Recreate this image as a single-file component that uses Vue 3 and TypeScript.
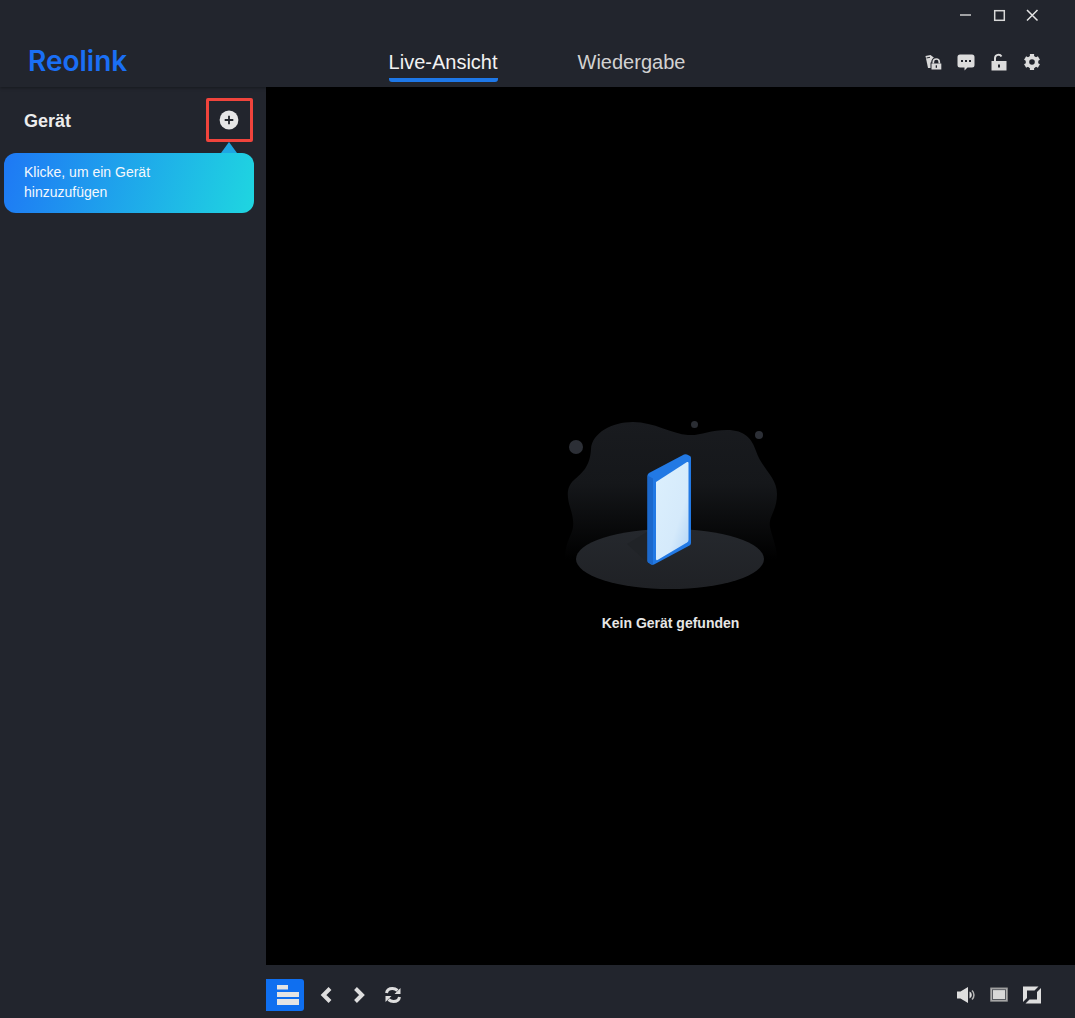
<script setup lang="ts">
const tabs: { label: string; active: boolean }[] = [
  { label: 'Live-Ansicht', active: true },
  { label: 'Wiedergabe', active: false },
]
</script>

<template>
  <div class="app">
    <header class="header">
      <div class="titlebar">
        <span class="icon"><svg width="20" height="20" viewBox="0 0 20 20"><path d="M4 10h11" stroke="#d8d8d8" stroke-width="1.400" /></svg></span>
        <span class="icon"><svg width="20" height="20" viewBox="0 0 20 20"><rect x="5.700" y="5.700" width="9.600" height="9.600" fill="none" stroke="#d8d8d8" stroke-width="1.500" /></svg></span>
        <span class="icon"><svg width="20" height="20" viewBox="0 0 20 20"><path d="M5 5l10.500 10.500M15.500 5L5 15.500" stroke="#e4e4e4" stroke-width="1.500" /></svg></span>
      </div>
      <div class="navrow">
        <div class="logo">Reolink</div>
        <nav class="tabs">
          <div v-for="t in tabs" :key="t.label" class="tab" :class="{ active: t.active }">{{ t.label }}</div>
        </nav>
        <div class="tools">
          <span class="icon">
            <svg width="20" height="20" viewBox="0 0 20 20">
              <path d="M2.500 4L7.500 3L12 6.500V16H5Z" fill="#d9d9d9" />
              <path d="M3.500 6L7 5.300" stroke="#22252d" stroke-width="1" />
              <path d="M10.300 11.500V10a3 3 0 0 1 6 0v1.500" fill="none" stroke="#22252d" stroke-width="4.200" />
              <rect x="7.500" y="10.500" width="11.500" height="8" fill="#22252d" />
              <path d="M10.300 11.500V10a3 3 0 0 1 6 0v1.500" fill="none" stroke="#d9d9d9" stroke-width="1.700" />
              <rect x="8.500" y="11.500" width="9.800" height="6" fill="#d9d9d9" />
              <rect x="12.700" y="13.300" width="1.300" height="2.500" fill="#22252d" />
            </svg>
          </span>
          <span class="icon">
            <svg width="20" height="20" viewBox="0 0 20 20">
              <path d="M4 2.500h12a2.500 2.500 0 0 1 2.500 2.500v8a2.500 2.500 0 0 1-2.500 2.500h-4.500L8.500 18.500v-3H4A2.500 2.500 0 0 1 1.500 13V5A2.500 2.500 0 0 1 4 2.500z" fill="#dcdcdc" />
              <rect x="5" y="8" width="2" height="2" fill="#22252d" /><rect x="9" y="8" width="2" height="2" fill="#22252d" /><rect x="13" y="8" width="2" height="2" fill="#22252d" />
            </svg>
          </span>
          <span class="icon">
            <svg width="20" height="20" viewBox="0 0 20 20">
              <path d="M6 9V6a3.500 3.500 0 0 1 6.500-1.500" fill="none" stroke="#dcdcdc" stroke-width="2" />
              <path d="M2.500 9h15v9.500h-15z" fill="#dcdcdc" />
              <rect x="9" y="12.500" width="2" height="3" fill="#22252d" />
            </svg>
          </span>
          <span class="icon">
            <svg width="20" height="20" viewBox="0 0 20 20">
              <circle cx="10" cy="10" r="6.300" fill="#dcdcdc" />
              <g stroke="#dcdcdc" stroke-width="4.200">
                <path d="M10 2v16" />
                <path d="M3.100 6l13.800 8" />
                <path d="M3.100 14l13.800-8" />
              </g>
              <circle cx="10" cy="10" r="2.800" fill="#22252d" />
            </svg>
          </span>
        </div>
      </div>
    </header>

    <div class="body">
      <aside class="sidebar">
        <div class="side-head">
          <span class="side-title">Gerät</span>
          <button class="add" type="button">
            <svg width="20" height="20" viewBox="0 0 20 20">
              <circle cx="10" cy="10" r="9.400" fill="#e6e6e6" />
              <path d="M5.700 10h8.600M10 5.700v8.600" stroke="#23262d" stroke-width="1.800" />
            </svg>
          </button>
        </div>
        <div class="hint">Klicke, um ein Gerät hinzuzufügen</div>
      </aside>

      <div class="content">
        <main class="stage">
          <svg class="art" width="240" height="172" viewBox="550 420 240 172">
            <defs>
              <linearGradient id="blob" x1="0" y1="0" x2="0" y2="1">
                <stop offset="0" stop-color="#191b1f" />
                <stop offset="0.45" stop-color="#15171a" />
                <stop offset="1" stop-color="#000000" />
              </linearGradient>
              <linearGradient id="plate" x1="0" y1="0" x2="0" y2="1">
                <stop offset="0" stop-color="#25282d" />
                <stop offset="1" stop-color="#1f2125" />
              </linearGradient>
              <linearGradient id="screen" x1="0" y1="0" x2="1" y2="1">
                <stop offset="0" stop-color="#dcf0fd" />
                <stop offset="0.65" stop-color="#d5eafb" />
                <stop offset="1" stop-color="#afd2f5" />
              </linearGradient>
            </defs>
            <path d="M633 423C612 423 592 434 591 450C590 468 582 474 574 481C566 488 567 498 570 508C573 518 575 526 571 535C568 542 565 548 565 560L777 560C777 548 772 538 770 528C768 518 777 512 777 495C777 478 762 470 756 452C752 440 745 431 727 431C710 431 700 437 688 436C672 435 654 423 633 423Z" fill="url(#blob)" />
            <ellipse cx="670" cy="560" rx="94" ry="30" fill="url(#plate)" />
            <path d="M627 545L647 533V563Z" fill="#202327" />
            <circle cx="576" cy="448" r="7" fill="#2c2f36" />
            <circle cx="694.500" cy="425.500" r="3.500" fill="#2a2d33" />
            <circle cx="759" cy="436" r="4" fill="#2c2f36" />
            <path d="M647.500 476.500Q647.500 475 649 474L684 455.500Q685.500 455 687 455.500L690 457Q691 457.500 691 459V544Q691 545.500 689.500 546.500L654 565.500Q652.500 566 651 565.500L649 564Q647.500 563.500 647.500 562Z" fill="#2279e4" />
            <path d="M647.500 476.500L653 479.500V565.500L649 564Q647.500 563.500 647.500 562Z" fill="#1b68cc" />
            <path d="M656 483L687 463Q688.500 462.500 688.500 464V541Q688.500 542.500 687 543.500L657.500 561Q656 561.500 656 560Z" fill="url(#screen)" />
          </svg>
          <p class="empty">Kein Gerät gefunden</p>
        </main>

        <footer class="controls">
          <div class="group">
            <button class="layout" type="button">
              <svg width="24" height="24" viewBox="0 0 24 24" fill="#e4e4e4">
                <rect x="1" y="2" width="11" height="4.500" />
                <rect x="1" y="9" width="22" height="5" />
                <rect x="1" y="16" width="22" height="6" />
              </svg>
            </button>
            <span class="icon"><svg width="20" height="20" viewBox="0 0 20 20"><path d="M13 3.500L6.500 10l6.500 6.500" fill="none" stroke="#dedede" stroke-width="4" /></svg></span>
            <span class="icon"><svg width="20" height="20" viewBox="0 0 20 20"><path d="M5.500 3.500L12 10l-6.500 6.500" fill="none" stroke="#dedede" stroke-width="4" /></svg></span>
            <span class="icon">
              <svg width="20" height="20" viewBox="0 0 20 20">
                <g fill="none" stroke="#dedede" stroke-width="3">
                  <path d="M3.500 8C4 5 6.500 3.500 9.500 3.500C11.500 3.500 13 4.200 14.500 5.500" />
                  <path d="M17.500 3V9H11.500Z" fill="#dedede" stroke="none" />
                </g>
                <g fill="none" stroke="#dedede" stroke-width="3" transform="rotate(180 10 10)">
                  <path d="M3.500 8C4 5 6.500 3.500 9.500 3.500C11.500 3.500 13 4.200 14.500 5.500" />
                  <path d="M17.500 3V9H11.500Z" fill="#dedede" stroke="none" />
                </g>
              </svg>
            </span>
          </div>
          <div class="group">
            <span class="icon">
              <svg width="20" height="20" viewBox="0 0 20 20" fill="#dedede">
                <path d="M1 6.500h3.500L12 2v16L4.500 13.500H1z" />
                <path d="M13.500 6.500a3.800 3.800 0 0 1 0 7z" />
                <path d="M16 5.500a6.200 6.200 0 0 1 0 9" fill="none" stroke="#b4b4b4" stroke-width="1.500" />
              </svg>
            </span>
            <span class="icon">
              <svg width="20" height="20" viewBox="0 0 20 20">
                <rect x="2" y="3.300" width="16" height="12.600" fill="#d8d8d8" stroke="#a0a0a0" stroke-width="1.500" />
                <rect x="3.400" y="4.700" width="13.200" height="9.800" fill="#d8d8d8" stroke="#3a3d44" stroke-width="0.800" />
              </svg>
            </span>
            <span class="icon">
              <svg width="20" height="20" viewBox="0 0 20 20" fill="#dedede">
                <path d="M1 1.500h15.500l-4 4H5v7.500l-4 4z" />
                <path d="M19 18.500H3.500l4-4H15V7l4-4z" />
              </svg>
            </span>
          </div>
        </footer>
      </div>
    </div>
  </div>
</template>

<style scoped>
.app {
  width: 1075px;
  height: 1018px;
  display: flex;
  flex-direction: column;
  background: #22252d;
  font-family: "Liberation Sans", Arial, sans-serif;
  overflow: hidden;
}
.header {
  height: 87px;
  flex: none;
  display: flex;
  flex-direction: column;
  position: relative;
  box-shadow: 0 1px 3px rgba(0, 0, 0, 0.35);
}
.titlebar {
  height: 30px;
  flex: none;
  display: flex;
  justify-content: flex-end;
  padding-right: 27px;
}
.icon {
  width: 33px;
  display: flex;
  align-items: center;
  justify-content: center;
}
.navrow {
  height: 57px;
  flex: none;
  display: grid;
  grid-template-columns: 1fr auto 1fr;
  align-items: start;
  padding: 0 27px 0 28px;
}
.logo {
  font-family: Inter, sans-serif;
  font-size: 28px;
  font-weight: 600;
  color: #1a6ff5;
  letter-spacing: 0;
  line-height: 32px;
  padding-top: 15px;
}
.tabs {
  display: flex;
  gap: 80px;
  margin-right: 2px;
}
.tab {
  height: 52px;
  box-sizing: border-box;
  padding-top: 19px;
  font-size: 20px;
  line-height: 26px;
  color: #d2d2d2;
}
.tab.active {
  color: #f2f2f2;
  border-bottom: 4px solid #1e78e8;
  border-radius: 0 0 3px 3px;
}
.tools {
  display: flex;
  justify-content: flex-end;
  box-sizing: border-box;
  height: 57px;
  padding-top: 7px;
}
.body {
  flex: 1;
  display: flex;
  min-height: 0;
}
.sidebar {
  width: 266px;
  flex: none;
  box-sizing: border-box;
  padding: 11px 12px 0 4px;
}
.side-head {
  display: flex;
  align-items: center;
  justify-content: space-between;
  height: 44px;
  padding-left: 20px;
  padding-right: 1px;
}
.side-title {
  font-size: 18px;
  font-weight: 700;
  color: #ececec;
  padding-top: 2px;
}
.add {
  width: 47px;
  height: 44px;
  box-sizing: border-box;
  border: 3px solid #f0443c;
  border-radius: 2px;
  background: transparent;
  padding: 0 1px 0 0;
  display: flex;
  align-items: center;
  justify-content: center;
}
.hint {
  position: relative;
  margin-top: 11px;
  height: 60px;
  box-sizing: border-box;
  padding: 9px 60px 0 20px;
  border-radius: 12px;
  font-size: 14px;
  line-height: 20px;
  color: #f4f8fc;
  background: linear-gradient(105deg, #1e78f5 0%, #1fd6e0 100%);
}
.hint::before {
  content: "";
  position: absolute;
  top: -11px;
  left: 217px;
  border-left: 8px solid transparent;
  border-right: 8px solid transparent;
  border-bottom: 11px solid #1ea6e2;
}
.content {
  flex: 1;
  display: flex;
  flex-direction: column;
  min-width: 0;
}
.stage {
  flex: 1;
  background: #000;
  display: flex;
  flex-direction: column;
  align-items: center;
  justify-content: center;
}
.art {
  display: block;
  margin-right: 2px;
}
.empty {
  margin: 22px 0 0;
  font-size: 14px;
  font-weight: 700;
  line-height: 20px;
  color: #e6e6e6;
}
.controls {
  height: 53px;
  flex: none;
  box-sizing: border-box;
  padding: 14px 27px 7px 0;
  display: flex;
  justify-content: space-between;
  align-items: stretch;
}
.group {
  display: flex;
  align-items: stretch;
}
.layout {
  width: 38px;
  height: 32px;
  margin-right: 6px;
  border: 0;
  border-radius: 0 3px 3px 0;
  background: #0f6ff0;
  padding: 0 0 0 6px;
  display: flex;
  align-items: center;
  justify-content: center;
}
</style>

<style>
html, body { margin: 0; background: #22252d; }
</style>
